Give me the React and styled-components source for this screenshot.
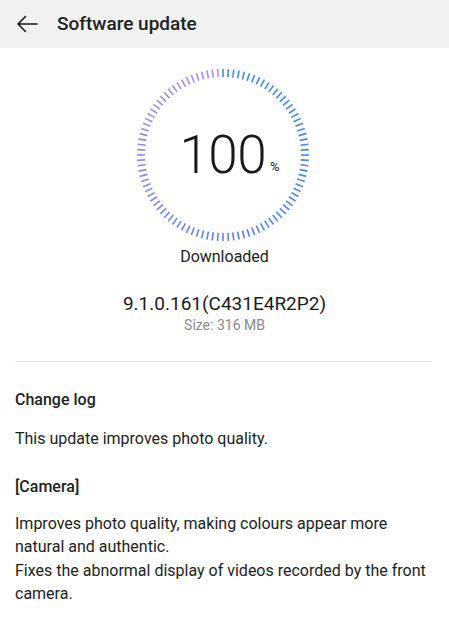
import React from 'react'
import styled, { createGlobalStyle } from 'styled-components'

const Global = createGlobalStyle`
  html, body { margin: 0; padding: 0; background: #fff; }
  body { font-family: Roboto, "Noto Sans", sans-serif; color: #1a1a1a; }
`

const TICKS = 100

function lerp(a, b, t) {
  return Math.round(a + (b - a) * t)
}

function tickColor(t) {
  // blue at top going clockwise to lavender/purple at the end
  const stops = [
    [0, [58, 140, 245]],
    [0.5, [88, 128, 240]],
    [0.75, [140, 140, 240]],
    [1, [178, 140, 240]],
  ]
  for (let i = 0; i < stops.length - 1; i++) {
    const [p0, c0] = stops[i]
    const [p1, c1] = stops[i + 1]
    if (t >= p0 && t <= p1) {
      const k = (t - p0) / (p1 - p0)
      return `rgb(${lerp(c0[0], c1[0], k)},${lerp(c0[1], c1[1], k)},${lerp(c0[2], c1[2], k)})`
    }
  }
  return 'rgb(178,140,240)'
}

function Ring() {
  const cx = 90
  const cy = 90
  const rOut = 86
  const rIn = 78
  const lines = []
  for (let i = 0; i < TICKS; i++) {
    const a = (i / TICKS) * Math.PI * 2
    const s = Math.sin(a)
    const c = -Math.cos(a)
    lines.push(
      <line
        key={i}
        x1={cx + s * rIn}
        y1={cy + c * rIn}
        x2={cx + s * rOut}
        y2={cy + c * rOut}
        stroke={tickColor(i / TICKS)}
        strokeWidth="1.6"
      />
    )
  }
  return (
    <svg width="180" height="180" viewBox="0 0 180 180">
      {lines}
    </svg>
  )
}

export default function App() {
  return (
    <Page>
      <Global />
      <Header>
        <BackIcon width="22" height="18" viewBox="0 0 22 18">
          <path d="M21 9H2M9.5 1.5L2 9l7.5 7.5" fill="none" stroke="#1a1a1a" strokeWidth="1.6" strokeLinecap="round" strokeLinejoin="round" />
        </BackIcon>
        <Title>Software update</Title>
      </Header>

      <Progress>
        <Dial>
          <Ring />
          <Percent>
            <Big>100</Big>
            <Small>%</Small>
          </Percent>
        </Dial>
        <Status>Downloaded</Status>
        <Version>9.1.0.161(C431E4R2P2)</Version>
        <Size>Size: 316 MB</Size>
      </Progress>

      <Divider />

      <Log>
        <Heading>Change log</Heading>
        <Para $top={18}>This update improves photo quality.</Para>
        <Heading $top={26}>[Camera]</Heading>
        <Para $top={16}>
          Improves photo quality, making colours appear more natural and authentic.
          <br />
          Fixes the abnormal display of videos recorded by the front camera.
        </Para>
      </Log>
    </Page>
  )
}

const Page = styled.div`
  width: 449px;
  min-height: 623px;
  background: #fff;
`

const Header = styled.div`
  height: 48px;
  background: #f1f1f1;
  display: flex;
  align-items: center;
  padding-left: 16px;
`

const BackIcon = styled.svg`
  margin-right: 19px;
  margin-top: -1px;
`

const Title = styled.div`
  font-size: 19px;
  font-weight: 500;
  color: #222;
  margin-top: -1px;
`

const Progress = styled.div`
  display: flex;
  flex-direction: column;
  align-items: center;
  padding-top: 17px;
`

const Dial = styled.div`
  position: relative;
  width: 180px;
  height: 180px;
  margin-left: -4px;
`

const Percent = styled.div`
  position: absolute;
  inset: 0;
  display: flex;
  align-items: center;
  justify-content: center;
  padding-left: 14px;
`

const Big = styled.span`
  font-size: 53px;
  font-weight: 300;
  color: #1a1a1a;
  letter-spacing: -0.5px;
`

const Small = styled.span`
  font-size: 13px;
  margin-top: 22px;
  margin-left: 4px;
  color: #1a1a1a;
`

const Status = styled.div`
  font-size: 16px;
  color: #222;
  margin-top: 2px;
`

const Version = styled.div`
  font-size: 19px;
  color: #1a1a1a;
  margin-top: 26px;
`

const Size = styled.div`
  font-size: 14px;
  color: #8a8a8a;
  margin-top: 2px;
`

const Divider = styled.div`
  height: 1px;
  background: #e6e6e6;
  margin: 28px 17px 0 15px;
`

const Log = styled.div`
  padding: 28px 15px 0 15px;
`

const Heading = styled.div`
  font-size: 16px;
  font-weight: 500;
  color: #222;
  margin-top: ${p => (p.$top || 0)}px;
`

const Para = styled.div`
  font-size: 16px;
  line-height: 23.5px;
  color: #222;
  margin-top: ${p => p.$top}px;
  max-width: 412px;
`
